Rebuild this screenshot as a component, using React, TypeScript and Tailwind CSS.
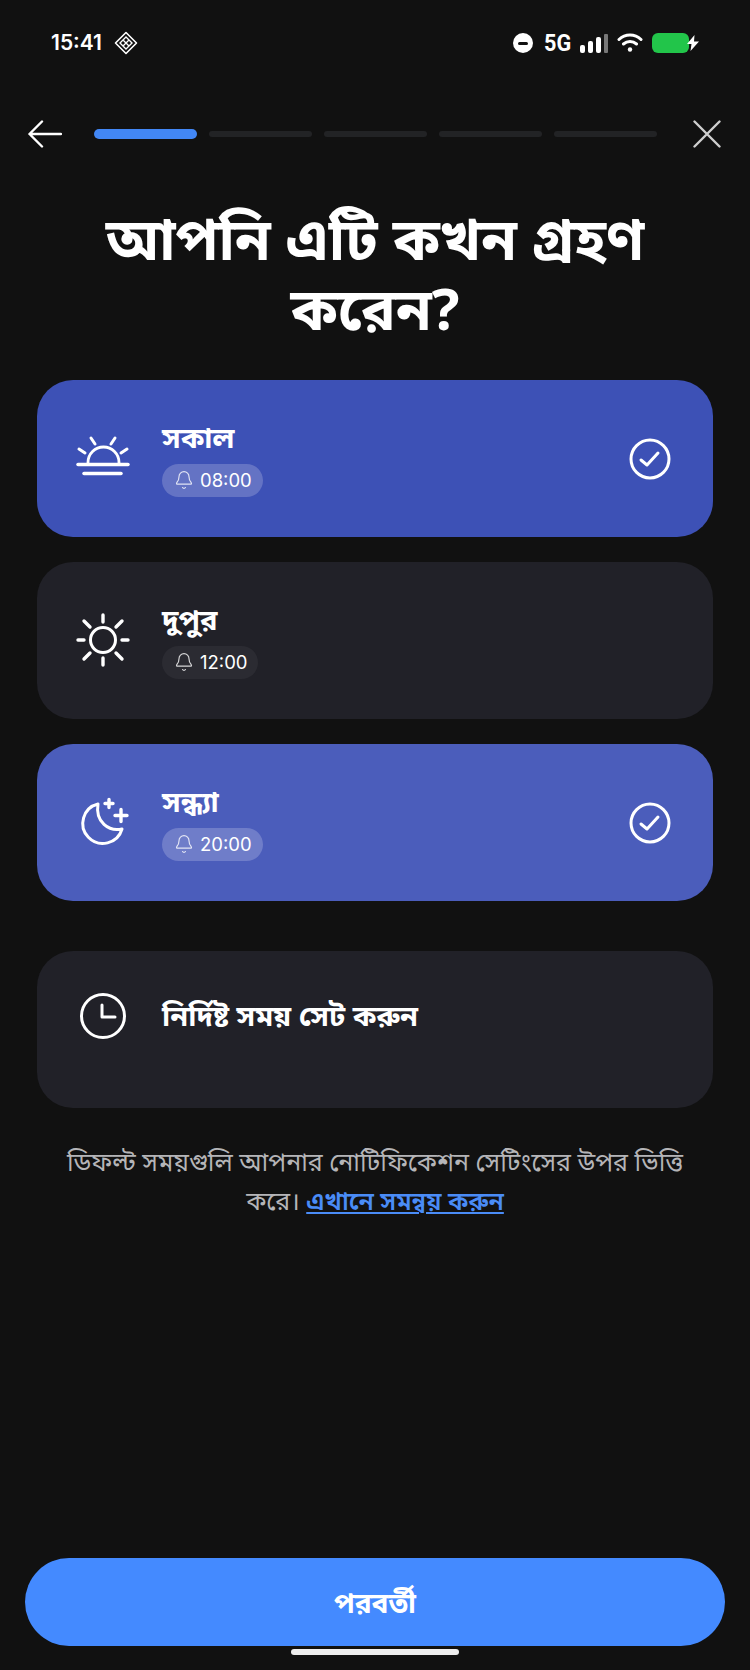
import { Bell } from 'lucide-react'
import type { ReactNode } from 'react'

const BN = "font-['Noto_Sans','Noto_Sans_Bengali','Liberation_Sans',sans-serif]"
const segments = ['bg-[#4287f5]', 'bg-[#222325]', 'bg-[#222325]', 'bg-[#222325]', 'bg-[#222325]']

function SunriseIcon() {
  return (
    <svg className="overflow-visible" width="54" height="44" viewBox="0 0 54 44" fill="none" stroke="white" strokeWidth="3" strokeLinecap="round">
      <path d="M2 27.500H52" strokeWidth="3.500" />
      <path d="M8 36.500H45" strokeWidth="3.500" />
      <path d="M12 27.500v-2a15.500 15.500 0 0 1 31 0v2" strokeWidth="2.800" />
      <path d="M15 1l4 6M39 1l-4 6M3 12l6 4M51 12l-6 4" />
    </svg>
  )
}

function SunIcon() {
  return (
    <svg className="overflow-visible" width="54" height="54" viewBox="0 1 54 54" fill="none" stroke="white" strokeWidth="3" strokeLinecap="round">
      <circle cx="27" cy="27" r="12.500" />
      <path d="M27 2v7M27 45v7M2 27h6M46 27h6M8 8l6 6M46 8l-6 6M8 46l6-6M46 46l-6-6" strokeWidth="3.400" />
    </svg>
  )
}

function MoonIcon() {
  return (
    <svg className="overflow-visible" width="54" height="54" viewBox="0 0 54 54" fill="none" stroke="white" strokeWidth="3" strokeLinecap="round" strokeLinejoin="round">
      <path d="M22 8A20 20 0 1 0 46 33C33 36 19 26 22 8z" />
      <path d="M33 3.500v8M29 7.500h8M45 13.500v12M39 19.500h12" strokeWidth="3.400" />
    </svg>
  )
}

function ClockIcon() {
  return (
    <svg width="48" height="48" viewBox="0 0 48 48" fill="none" stroke="white" strokeWidth="3" strokeLinecap="round" strokeLinejoin="round">
      <circle cx="24" cy="24" r="21.500" />
      <path d="M23 13v12h13" />
    </svg>
  )
}

function CheckIcon() {
  return (
    <svg width="42" height="42" viewBox="0 0 42 42" fill="none" stroke="white" strokeWidth="3" strokeLinecap="round" strokeLinejoin="round">
      <circle cx="21" cy="21" r="19" />
      <path d="M12 22l6 5 11-12" />
    </svg>
  )
}

type SlotProps = {
  icon: ReactNode
  title: string
  time: string
  bg: string
  pill: string
  checked?: boolean
}

function SlotCard({ icon, title, time, bg, pill, checked }: SlotProps) {
  return (
    <div className={`${bg} h-[157px] rounded-[36px] flex items-center pl-[39px] pr-[42px]`}>
      <div className="w-[54px] flex justify-center shrink-0">{icon}</div>
      <div className="ml-[32px] flex-1">
        <div className={`${BN} text-white text-[29px] leading-[33px] font-bold`}>{title}</div>
        <div className={`${pill} mt-[11px] inline-flex h-[33px] items-center rounded-full pl-[12px] pr-[11px] gap-[6px]`}>
          <Bell size={20} strokeWidth={1.4} className="text-white/80 -mt-[1px]" />
          <span className="font-['Inter',sans-serif] text-white text-[18.500px]">{time}</span>
        </div>
      </div>
      {checked && <CheckIcon />}
    </div>
  )
}

export default function App() {
  return (
    <div className="w-[750px] h-[1670px] bg-[#111111] flex flex-col overflow-hidden">
      {/* status bar */}
      <div className="h-[86px] pl-[51px] pr-[51px] flex items-center justify-between shrink-0">
        <div className="flex items-center gap-[12px]">
          <span className="font-['Inter',sans-serif] text-white text-[21px] font-semibold">15:41</span>
          <svg width="24" height="24" viewBox="0 0 24 24" fill="none" stroke="white" strokeWidth="1.600">
            <path d="M12 1.500L22.500 12 12 22.500 1.500 12z" strokeLinejoin="round" />
            <path d="M12 6l6 6-6 6-6-6zM9 9l6 6M15 9l-6 6" strokeWidth="1.400" />
          </svg>
        </div>
        <div className="flex items-center">
          <div className="w-[20px] h-[20px] rounded-full bg-white flex items-center justify-center">
            <div className="w-[10px] h-[3px] bg-[#111111] rounded-full" />
          </div>
          <span className="ml-[11px] font-['Roboto',sans-serif] text-white text-[24px] font-bold leading-none scale-x-90 origin-left w-[27px]">5G</span>
          <div className="ml-[9px] flex items-end gap-[3px] h-[19px]">
            <div className="w-[5px] h-[8px] bg-white rounded-[2px]" />
            <div className="w-[5px] h-[12px] bg-white rounded-[2px]" />
            <div className="w-[5px] h-[16px] bg-white rounded-[2px]" />
            <div className="w-[4px] h-[19px] bg-[#777] rounded-[1px]" />
          </div>
          <svg className="ml-[9px]" width="26" height="20" viewBox="0 0 26 20" fill="none" stroke="white" strokeWidth="3" strokeLinecap="round">
            <path d="M2 6.500a16 16 0 0 1 22 0M6.500 11a10 10 0 0 1 13 0" />
            <circle cx="13" cy="16.500" r="2.200" fill="white" stroke="none" />
          </svg>
          <div className="ml-[9px] w-[37px] h-[20px] rounded-[6px] bg-[#22c54a]" />
          <svg className="-ml-[2px]" width="12" height="16" viewBox="0 0 12 16" fill="white">
            <path d="M7.500 0L0 9h4.500L3.500 16 12 6.500H7z" />
          </svg>
        </div>
      </div>

      {/* progress */}
      <div className="h-[30px] mt-[33px] pl-[28px] pr-[29px] flex items-center shrink-0">
        <svg width="34" height="28" viewBox="0 0 34 28" fill="none" stroke="white" strokeWidth="2.400" strokeLinecap="round" strokeLinejoin="round">
          <path d="M14 1.500L1.500 14 14 26.500M1.500 14H33" />
        </svg>
        <div className="ml-[32px] flex items-center gap-[12px]">
          {segments.map((color, i) => (
            <div key={i} className={`${color} w-[103px] rounded-full ${i === 0 ? 'h-[10px]' : 'h-[6px]'}`} />
          ))}
        </div>
        <svg className="ml-auto" width="28" height="28" viewBox="0 0 28 28" fill="none" stroke="#cfcfcf" strokeWidth="2.400" strokeLinecap="round">
          <path d="M1.500 1.500l25 25M26.500 1.500l-25 25" />
        </svg>
      </div>

      {/* title */}
      <h1 className={`${BN} mt-[54px] px-[40px] text-center text-white text-[58px] leading-[70px] font-bold`}>
        আপনি এটি কখন গ্রহণ<br />করেন?
      </h1>

      {/* options */}
      <div className="mt-[37px] px-[37px] flex flex-col gap-[25px]">
        <SlotCard icon={<SunriseIcon />} title="সকাল" time="08:00" bg="bg-[#3d51b6]" pill="bg-[#6473c4]" checked />
        <SlotCard icon={<SunIcon />} title="দুপুর" time="12:00" bg="bg-[#212128]" pill="bg-[#2b2b32]" />
        <SlotCard icon={<MoonIcon />} title="সন্ধ্যা" time="20:00" bg="bg-[#4b5dbb]" pill="bg-[#6f7dc9]" checked />
      </div>

      <div className="mt-[50px] mx-[37px] h-[157px] bg-[#212128] rounded-[36px] flex items-start pt-[41px] pl-[42px]">
        <ClockIcon />
        <div className={`${BN} ml-[35px] mt-[1px] text-white text-[29px] leading-[44px] font-bold`}>নির্দিষ্ট সময় সেট করুন</div>
      </div>

      <p className={`${BN} mt-[34px] px-[40px] text-center text-[#b5b5b8] text-[25px] leading-[39px]`}>
        ডিফল্ট সময়গুলি আপনার নোটিফিকেশন সেটিংসের উপর ভিত্তি<br />করে। <span className="text-[#4a8cf7] underline font-semibold">এখানে সমন্বয় করুন</span>
      </p>

      {/* footer */}
      <div className="mt-auto px-[25px] flex flex-col items-center">
        <button className={`${BN} w-full h-[88px] rounded-full bg-[#448aff] text-white text-[28px] font-bold`}>পরবর্তী</button>
        <div className="mt-[3px] mb-[15px] w-[168px] h-[6px] rounded-full bg-[#eeeeee]" />
      </div>
    </div>
  )
}
